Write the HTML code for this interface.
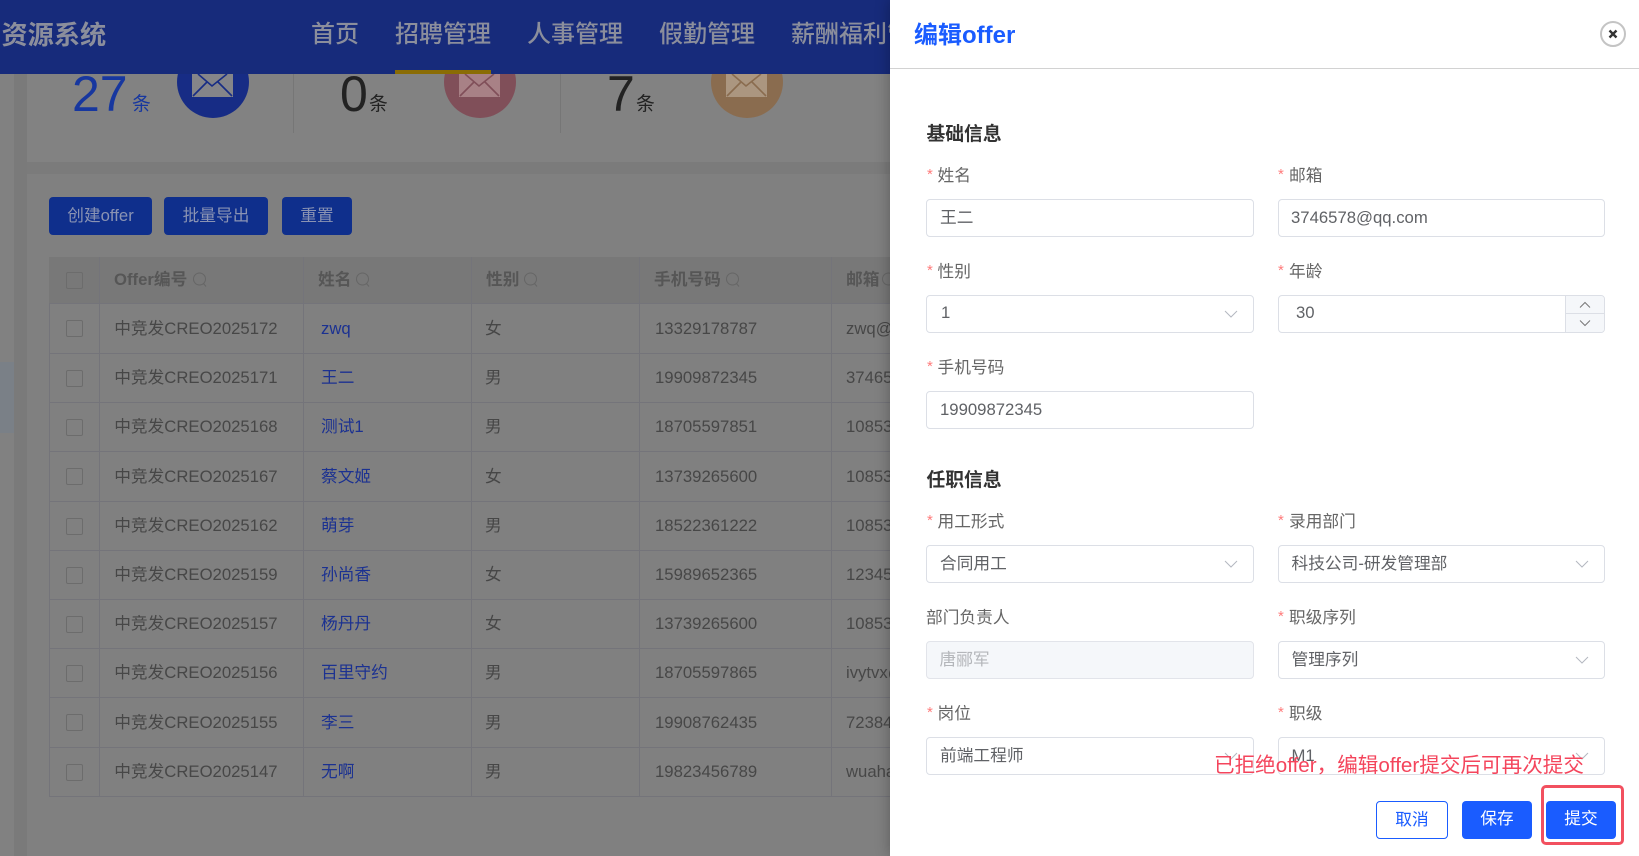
<!DOCTYPE html>
<html lang="zh">
<head>
<meta charset="utf-8">
<title>编辑offer</title>
<style>
html,body{margin:0;padding:0}
body{width:1639px;height:856px;overflow:hidden;position:relative;background:#808080;font-family:"Liberation Sans","Noto Sans CJK SC",sans-serif;font-size:16.72px}
div,span,svg{box-sizing:border-box}
.a{position:absolute}
.t{position:absolute;white-space:nowrap;line-height:24px}
.nav{top:23px;font-size:24px;font-weight:500;color:#8b8e9c;line-height:24px;position:absolute;white-space:nowrap}
.btn{position:absolute;top:197px;height:38px;background:#0f2f8c;border-radius:4px;color:#8a93b3;text-align:center;line-height:37px}
.row{position:absolute;left:49px;width:841px;border-bottom:1px solid #74747a}
.row .t{color:#474747;top:50%;margin-top:-12px}
.row .n{left:272px;color:#1b3191}
.row .o{left:65.2px}
.row .g{left:436px}
.row .p{left:606px}
.row .e{left:797px}
.cb{position:absolute;left:17px;top:50%;margin-top:-8.5px;width:17px;height:17px;border:1px solid #6c6c6c;border-radius:2px}
.v{position:absolute;top:257px;width:1px;height:539px;background:#74747a}
.th{position:absolute;top:268px;white-space:nowrap;line-height:24px;color:#565656;font-weight:bold}
.lb{position:absolute;white-space:nowrap;line-height:24px;color:#666;font-size:16.72px}
.st{position:absolute;color:#ff7b7b;font-size:15px;line-height:16px}
.f{position:absolute;height:38px;background:#fff;border:1px solid #dcdfe6;border-radius:4px;color:#606266;line-height:35px;padding-left:13px;white-space:nowrap}
.c1{left:926px;width:328px}
.c2{left:1278px;width:327px}
.cv{position:absolute;right:15px;top:14px}
.sec{position:absolute;left:926.5px;font-size:18.8px;font-weight:bold;color:#333;line-height:24px;white-space:nowrap}
.b2{position:absolute;top:801px;height:38px;border-radius:4px;text-align:center;line-height:35px;background:#1a5cff;color:#fff;font-size:16.72px}
</style>
</head>
<body>

<!-- left background strips -->
<div class="a" style="left:0;top:0;width:14px;height:856px;background:#818181"></div>
<div class="a" style="left:0;top:362px;width:14px;height:71px;background:#7a8087"></div>
<div class="a" style="left:14px;top:0;width:13px;height:856px;background:#7a7a7a"></div>
<div class="a" style="left:27px;top:0;width:870px;height:162px;background:#828282"></div>
<div class="a" style="left:27px;top:162px;width:870px;height:12px;background:#7b7b7b"></div>
<div class="a" style="left:27px;top:174px;width:870px;height:682px;background:#808080"></div>

<!-- stats -->
<div class="a" style="left:293px;top:74px;width:1px;height:59px;background:#767676"></div>
<div class="a" style="left:560px;top:74px;width:1px;height:59px;background:#767676"></div>

<div class="t" style="left:72px;top:69px;font-size:50px;line-height:50px;color:#17379f">27</div>
<div class="t" style="left:132px;top:92px;font-size:18.8px;color:#17379f">条</div>
<svg class="a" style="left:177px;top:46px" width="72" height="72" viewBox="0 0 72 72">
<circle cx="36" cy="36" r="36" fill="#172c85"/>
<rect x="15" y="20" width="41" height="31" fill="#858589"/>
<path d="M21 28L35 40L50 28M16 50L30 36M55 50L41 36" fill="none" stroke="#172c85" stroke-width="1.6"/>
</svg>

<div class="t" style="left:340px;top:69px;font-size:50px;line-height:50px;color:#222">0</div>
<div class="t" style="left:369px;top:92px;font-size:18.8px;color:#222">条</div>
<svg class="a" style="left:444px;top:46px" width="72" height="72" viewBox="0 0 72 72">
<circle cx="36" cy="36" r="36" fill="#804f59"/>
<rect x="15" y="20" width="41" height="31" fill="#a88186"/>
<path d="M21 28L35 40L50 28M16 50L30 36M55 50L41 36" fill="none" stroke="#804f59" stroke-width="1.6"/>
</svg>

<div class="t" style="left:607px;top:69px;font-size:50px;line-height:50px;color:#222">7</div>
<div class="t" style="left:636px;top:92px;font-size:18.8px;color:#222">条</div>
<svg class="a" style="left:711px;top:46px" width="72" height="72" viewBox="0 0 72 72">
<circle cx="36" cy="36" r="36" fill="#8a6c4f"/>
<rect x="15" y="20" width="41" height="31" fill="#ab9680"/>
<path d="M21 28L35 40L50 28M16 50L30 36M55 50L41 36" fill="none" stroke="#8a6c4f" stroke-width="1.6"/>
</svg>

<!-- header -->
<div class="a" style="left:0;top:0;width:900px;height:74px;background:#172b7b"></div>
<div class="t" style="left:1.5px;top:23px;font-size:26.2px;font-weight:bold;color:#8b8e9c">资源系统</div>
<div class="nav" style="left:311px">首页</div>
<div class="nav" style="left:395px">招聘管理</div>
<div class="nav" style="left:527px">人事管理</div>
<div class="nav" style="left:659px">假勤管理</div>
<div class="nav" style="left:791px">薪酬福利管理</div>
<div class="a" style="left:395px;top:70px;width:96px;height:4px;background:#8a6c05"></div>

<!-- buttons -->
<div class="btn" style="left:49px;width:103px">创建offer</div>
<div class="btn" style="left:164px;width:104px">批量导出</div>
<div class="btn" style="left:282px;width:70px">重置</div>

<!-- table -->
<div class="a" style="left:49px;top:257px;width:841px;height:47px;background:#787878"></div>
<div class="a" style="left:49px;top:304px;width:1px;height:492px;background:#74747a"></div>
<div class="v" style="left:99px"></div>
<div class="v" style="left:303px"></div>
<div class="v" style="left:471px"></div>
<div class="v" style="left:639px"></div>
<div class="v" style="left:831px"></div>

<div class="a" style="left:66px;top:272px;width:17px;height:17px;border:1px solid #6c6c6c;border-radius:2px"></div>
<div class="th" style="left:114px">Offer编号</div>
<div class="th" style="left:318px">姓名</div>
<div class="th" style="left:486px">性别</div>
<div class="th" style="left:654px">手机号码</div>
<div class="th" style="left:846px">邮箱</div>
<svg class="a" style="left:192px;top:272px" width="16" height="16" viewBox="0 0 16 16"><circle cx="7.5" cy="7" r="6" fill="none" stroke="#666" stroke-width="1"/><path d="M11.5 11.5L14 14.5" stroke="#666" fill="none"/></svg>
<svg class="a" style="left:355px;top:272px" width="16" height="16" viewBox="0 0 16 16"><circle cx="7.5" cy="7" r="6" fill="none" stroke="#666" stroke-width="1"/><path d="M11.5 11.5L14 14.5" stroke="#666" fill="none"/></svg>
<svg class="a" style="left:523px;top:272px" width="16" height="16" viewBox="0 0 16 16"><circle cx="7.5" cy="7" r="6" fill="none" stroke="#666" stroke-width="1"/><path d="M11.5 11.5L14 14.5" stroke="#666" fill="none"/></svg>
<svg class="a" style="left:725px;top:272px" width="16" height="16" viewBox="0 0 16 16"><circle cx="7.5" cy="7" r="6" fill="none" stroke="#666" stroke-width="1"/><path d="M11.5 11.5L14 14.5" stroke="#666" fill="none"/></svg>
<svg class="a" style="left:881px;top:272px" width="16" height="16" viewBox="0 0 16 16"><circle cx="7.5" cy="7" r="6" fill="none" stroke="#666" stroke-width="1"/><path d="M11.5 11.5L14 14.5" stroke="#666" fill="none"/></svg>

<div class="a" style="left:49px;top:303px;width:841px;height:1px;background:#74747a"></div>

<div class="row" style="top:304px;height:50px"><div class="cb"></div><div class="t o">中竞发CREO2025172</div><div class="t n">zwq</div><div class="t g">女</div><div class="t p">13329178787</div><div class="t e">zwq@qq.com</div></div>
<div class="row" style="top:354px;height:49px"><div class="cb"></div><div class="t o">中竞发CREO2025171</div><div class="t n">王二</div><div class="t g">男</div><div class="t p">19909872345</div><div class="t e">3746578@qq.com</div></div>
<div class="row" style="top:403px;height:49px"><div class="cb"></div><div class="t o">中竞发CREO2025168</div><div class="t n">测试1</div><div class="t g">男</div><div class="t p">18705597851</div><div class="t e">1085373@qq.com</div></div>
<div class="row" style="top:452px;height:50px"><div class="cb"></div><div class="t o">中竞发CREO2025167</div><div class="t n">蔡文姬</div><div class="t g">女</div><div class="t p">13739265600</div><div class="t e">1085373@qq.com</div></div>
<div class="row" style="top:502px;height:49px"><div class="cb"></div><div class="t o">中竞发CREO2025162</div><div class="t n">萌芽</div><div class="t g">男</div><div class="t p">18522361222</div><div class="t e">1085373@qq.com</div></div>
<div class="row" style="top:551px;height:49px"><div class="cb"></div><div class="t o">中竞发CREO2025159</div><div class="t n">孙尚香</div><div class="t g">女</div><div class="t p">15989652365</div><div class="t e">1234567@qq.com</div></div>
<div class="row" style="top:600px;height:49px"><div class="cb"></div><div class="t o">中竞发CREO2025157</div><div class="t n">杨丹丹</div><div class="t g">女</div><div class="t p">13739265600</div><div class="t e">1085373@qq.com</div></div>
<div class="row" style="top:649px;height:49px"><div class="cb"></div><div class="t o">中竞发CREO2025156</div><div class="t n">百里守约</div><div class="t g">男</div><div class="t p">18705597865</div><div class="t e">ivytvx@qq.com</div></div>
<div class="row" style="top:698px;height:50px"><div class="cb"></div><div class="t o">中竞发CREO2025155</div><div class="t n">李三</div><div class="t g">男</div><div class="t p">19908762435</div><div class="t e">7238456@qq.com</div></div>
<div class="row" style="top:748px;height:49px"><div class="cb"></div><div class="t o">中竞发CREO2025147</div><div class="t n">无啊</div><div class="t g">男</div><div class="t p">19823456789</div><div class="t e">wuaha@qq.com</div></div>

<!-- drawer -->
<div class="a" style="left:890px;top:0;width:749px;height:856px;background:#fff;box-shadow:0 0 14px rgba(0,0,0,.3)"></div>
<div class="a" style="left:890px;top:68px;width:749px;height:1px;background:#d2d2d2"></div>
<div class="t" style="left:914px;top:24px;font-size:24px;font-weight:bold;color:#1a5cff">编辑offer</div>
<svg class="a" style="left:1599px;top:20px" width="28" height="28" viewBox="0 0 28 28">
<circle cx="14" cy="14" r="12" fill="#fff" stroke="#c4c4c4" stroke-width="2"/>
<path d="M10.5 10.5L17.5 17.5M17.5 10.5L10.5 17.5" stroke="#333" stroke-width="2.4" fill="none"/>
</svg>

<div class="sec" style="top:122px">基础信息</div>

<div class="st" style="left:927px;top:167px">*</div><div class="lb" style="left:937.5px;top:164px">姓名</div>
<div class="st" style="left:1278px;top:167px">*</div><div class="lb" style="left:1289px;top:164px">邮箱</div>
<div class="f c1" style="top:199px">王二</div>
<div class="f c2" style="top:199px;padding-left:12px">3746578@qq.com</div>

<div class="st" style="left:927px;top:263px">*</div><div class="lb" style="left:937.5px;top:260px">性别</div>
<div class="st" style="left:1278px;top:263px">*</div><div class="lb" style="left:1289px;top:260px">年龄</div>
<div class="f c1" style="top:295px;padding-left:14px;line-height:34px">1<svg class="cv" width="14" height="8" viewBox="0 0 14 8"><path d="M1 1L7 7L13 1" fill="none" stroke="#b4b8c0" stroke-width="1"/></svg></div>
<div class="f c2" style="top:295px;padding-left:17px;overflow:hidden;line-height:34px">30
<div class="a" style="left:286px;top:0;width:40px;height:36px;background:#f5f7fa;border-left:1px solid #dcdfe6"></div>
<div class="a" style="left:286px;top:17px;width:40px;height:1px;background:#dcdfe6"></div>
<svg class="a" style="left:300px;top:5px" width="12" height="8" viewBox="0 0 12 8"><path d="M1 6.5L6 1.5L11 6.5" fill="none" stroke="#777" stroke-width="1"/></svg>
<svg class="a" style="left:300px;top:23px" width="12" height="8" viewBox="0 0 12 8"><path d="M1 1.5L6 6.5L11 1.5" fill="none" stroke="#777" stroke-width="1"/></svg>
</div>

<div class="st" style="left:927px;top:359px">*</div><div class="lb" style="left:937.5px;top:356px">手机号码</div>
<div class="f c1" style="top:391px">19909872345</div>

<div class="sec" style="top:468px">任职信息</div>

<div class="st" style="left:927px;top:513px">*</div><div class="lb" style="left:937.5px;top:510px">用工形式</div>
<div class="st" style="left:1278px;top:513px">*</div><div class="lb" style="left:1289px;top:510px">录用部门</div>
<div class="f c1" style="top:545px;padding-left:13px">合同用工<svg class="cv" width="14" height="8" viewBox="0 0 14 8"><path d="M1 1L7 7L13 1" fill="none" stroke="#b4b8c0" stroke-width="1"/></svg></div>
<div class="f c2" style="top:545px;padding-left:12.5px">科技公司-研发管理部<svg class="cv" width="14" height="8" viewBox="0 0 14 8"><path d="M1 1L7 7L13 1" fill="none" stroke="#b4b8c0" stroke-width="1"/></svg></div>

<div class="lb" style="left:926px;top:606px">部门负责人</div>
<div class="st" style="left:1278px;top:609px">*</div><div class="lb" style="left:1289px;top:606px">职级序列</div>
<div class="f c1" style="top:641px;background:#f5f7fa;color:#b4b6ba;border-color:#e2e4ea;padding-left:12.5px">唐郦军</div>
<div class="f c2" style="top:641px;padding-left:12.5px">管理序列<svg class="cv" width="14" height="8" viewBox="0 0 14 8"><path d="M1 1L7 7L13 1" fill="none" stroke="#b4b8c0" stroke-width="1"/></svg></div>

<div class="st" style="left:927px;top:705px">*</div><div class="lb" style="left:937.5px;top:702px">岗位</div>
<div class="st" style="left:1278px;top:705px">*</div><div class="lb" style="left:1289px;top:702px">职级</div>
<div class="f c1" style="top:737px;padding-left:13px">前端工程师<svg class="cv" width="14" height="8" viewBox="0 0 14 8"><path d="M1 1L7 7L13 1" fill="none" stroke="#b4b8c0" stroke-width="1"/></svg></div>
<div class="f c2" style="top:737px;padding-left:12.5px">M1<svg class="cv" width="14" height="8" viewBox="0 0 14 8"><path d="M1 1L7 7L13 1" fill="none" stroke="#b4b8c0" stroke-width="1"/></svg></div>

<div class="t" style="left:1214px;top:754px;font-size:20.6px;color:#f4455c">已拒绝offer，编辑offer提交后可再次提交</div>

<div class="b2" style="left:1376px;width:72px;background:#fff;border:1px solid #1a5cff;color:#1a5cff">取消</div>
<div class="b2" style="left:1462px;width:70px;line-height:36px">保存</div>
<div class="b2" style="left:1546px;width:70px;line-height:36px">提交</div>
<div class="a" style="left:1541px;top:785px;width:83px;height:60px;border:3px solid #f2505f;border-radius:5px"></div>

</body>
</html>
